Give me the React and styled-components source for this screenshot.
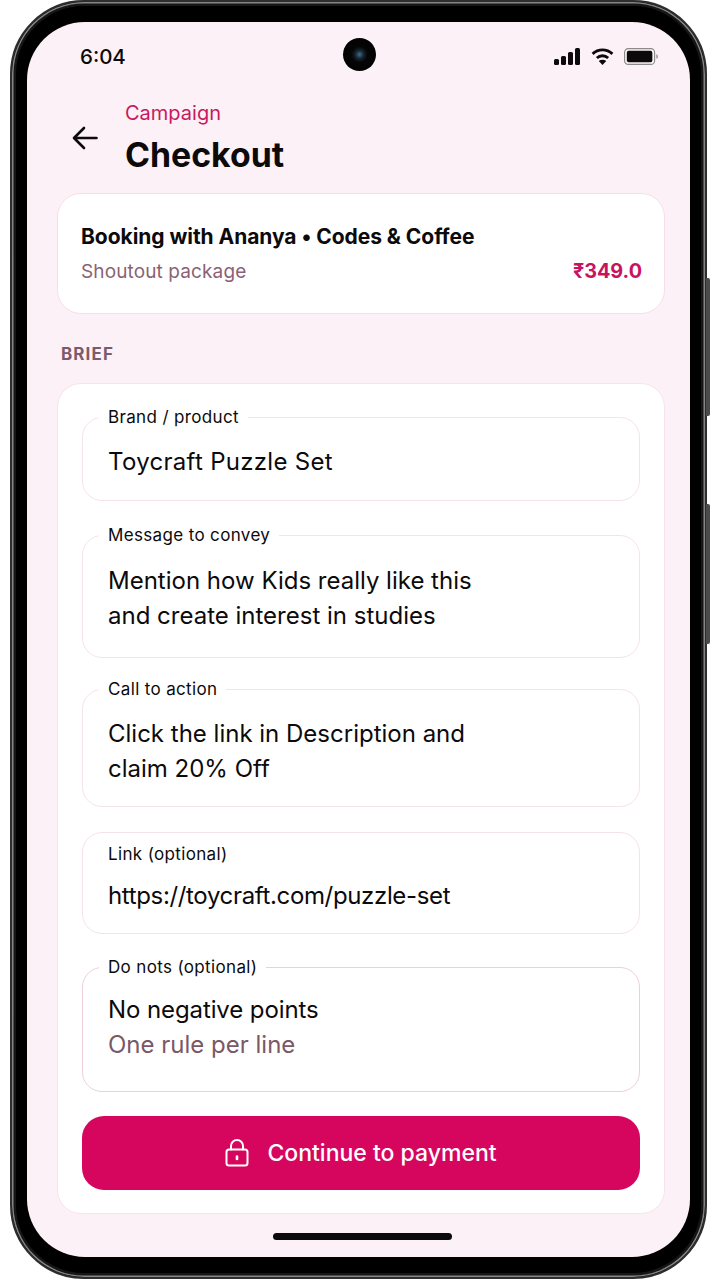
import React from "react"
import styled, { createGlobalStyle } from "styled-components"

const GlobalStyle = createGlobalStyle`
  html, body {
    margin: 0;
    padding: 0;
    background: #fff;
  }
  body {
    font-family: Inter, "Noto Sans", sans-serif;
    color: #0c0a0b;
  }
  * {
    box-sizing: border-box;
  }
`

function BackArrow() {
  return (
    <svg width="26" height="24" viewBox="0 0 26 24" fill="none" stroke="#0c0a0b" strokeWidth="2.6" strokeLinecap="round" strokeLinejoin="round">
      <path d="M24.5 12H2M12 2 2 12l10 10" />
    </svg>
  )
}

function Signal() {
  return (
    <svg width="26" height="17" viewBox="0 0 26 17" fill="#0c0a0b">
      <rect x="0" y="11" width="5" height="6" rx="1.5" />
      <rect x="7" y="8" width="5" height="9" rx="1.5" />
      <rect x="14" y="4" width="5" height="13" rx="1.5" />
      <rect x="21" y="0" width="5" height="17" rx="1.5" />
    </svg>
  )
}

function Wifi() {
  return (
    <svg width="23" height="17" viewBox="0 0 24 18" fill="none" stroke="#0c0a0b" strokeWidth="3">
      <path d="M1.5 6.2C7.5 .6 16.5 .6 22.5 6.2" />
      <path d="M6 10.6c3.5-3.2 8.5-3.2 12 0" />
      <path d="M12 18l-4-4.2c2.300-1.800 5.700-1.800 8 0z" fill="#0c0a0b" stroke="none" />
    </svg>
  )
}

function Battery() {
  return (
    <svg width="34" height="17" viewBox="0 0 36 18">
      <rect x=".6" y=".6" width="31.800" height="16.800" rx="4" fill="none" stroke="#8a8a8a" strokeWidth="1.200" />
      <rect x="3" y="3" width="27" height="12" rx="2" fill="#0c0a0b" />
      <path d="M34.300 6.500c1 .3 1.500 1.300 1.500 2.500s-.5 2.200-1.500 2.500z" fill="#8a8a8a" />
    </svg>
  )
}

function LockIcon() {
  return (
    <svg width="24" height="28" viewBox="0 0 24 28" fill="none" stroke="#fff" strokeWidth="2" strokeLinecap="round">
      <rect x="1.500" y="10.500" width="21" height="16" rx="2.500" />
      <path d="M6 10.500V7a6 6 0 0 1 12 0v3.500" />
      <path d="M12 17.500v2.500" strokeWidth="2.600" />
    </svg>
  )
}

function Field({ label, lines, hint, height, top, strong, gap, track }) {
  return (
    <FieldBox $height={height} $top={top} $strong={strong}>
      <FieldLabel $gap={gap}>{label}</FieldLabel>
      {lines.map((line) => (
        <FieldLine key={line} $track={track}>{line}</FieldLine>
      ))}
      {hint && <FieldLine $hint>{hint}</FieldLine>}
    </FieldBox>
  )
}

export default function App() {
  return (
    <Page>
      <GlobalStyle />
      <Phone>
        <SideKey $top={276} $height={138} />
        <SideKey $top={502} $height={140} />
        <Screen>
          <StatusBar>
            <Clock>6:04</Clock>
            <Camera />
            <StatusIcons>
              <Signal />
              <Wifi />
              <Battery />
            </StatusIcons>
          </StatusBar>

          <Header>
            <BackButton>
              <BackArrow />
            </BackButton>
            <div>
              <Eyebrow>Campaign</Eyebrow>
              <Title>Checkout</Title>
            </div>
          </Header>

          <SummaryCard>
            <SummaryTitle>Booking with Ananya • Codes &amp; Coffee</SummaryTitle>
            <SummaryRow>
              <SummaryPackage>Shoutout package</SummaryPackage>
              <Price>₹349.0</Price>
            </SummaryRow>
          </SummaryCard>

          <SectionLabel>BRIEF</SectionLabel>

          <BriefCard>
            <Field label="Brand / product" lines={["Toycraft Puzzle Set"]} height={94} track={0.3} />
            <Field label="Message to convey" lines={["Mention how Kids really like this", "and create interest in studies"]} height={133} top={24} gap={18} />
            <Field label="Call to action" lines={["Click the link in Description and", "claim 20% Off"]} height={128} top={21} />
            <InlineField>
              <InlineLabel>Link (optional)</InlineLabel>
              <FieldLine $track={-0.35}>https://toycraft.com/puzzle-set</FieldLine>
            </InlineField>
            <Field label="Do nots (optional)" lines={["No negative points"]} hint="One rule per line" height={135} top={23} gap={15} strong track={-0.1} />
            <PayButton>
              <LockIcon />
              Continue to payment
            </PayButton>
          </BriefCard>

          <HomeBar />
        </Screen>
      </Phone>
    </Page>
  )
}

const Page = styled.div`
  width: 720px;
  height: 1280px;
  padding-left: 10px;
  overflow: hidden;
  background: #fff;
`

const Phone = styled.div`
  position: relative;
  width: 697px;
  height: 1279px;
  padding: 20px 15px;
  background: #000;
  border: 2px solid #2e2e2e;
  border-radius: 74px;
  box-shadow: inset 0 0 0 1.5px #858585, inset 0 0 0 4px #161616;
`

const SideKey = styled.div`
  position: absolute;
  top: ${(p) => p.$top}px;
  right: -5px;
  width: 4px;
  height: ${(p) => p.$height}px;
  background: #4b4b4b;
  border-radius: 0 2px 2px 0;
`

const Screen = styled.div`
  display: flex;
  flex-direction: column;
  height: 100%;
  padding: 0 25px 0 30px;
  background: #fcf1f6;
  border-radius: 58px;
  overflow: hidden;
`

const StatusBar = styled.div`
  position: relative;
  display: flex;
  align-items: center;
  justify-content: space-between;
  flex: none;
  height: 68px;
  padding: 0 7px 0 23px;
`

const Clock = styled.span`
  font-size: 20.5px;
  font-weight: 500;
`

const Camera = styled.div`
  position: absolute;
  top: 16px;
  left: 286px;
  width: 33px;
  height: 33px;
  border-radius: 50%;
  background: radial-gradient(circle, #3c6d8f 0, #16242e 18%, #050505 34%, #000 100%);
`

const StatusIcons = styled.div`
  display: flex;
  align-items: center;
  gap: 10.5px;
`

const Header = styled.header`
  display: flex;
  align-items: flex-end;
  flex: none;
  height: 103px;
  padding: 0 0 17px 15px;
`

const BackButton = styled.div`
  display: flex;
  width: 53px;
  height: 24px;
  margin-bottom: 26px;
`

const Eyebrow = styled.div`
  font-size: 20px;
  line-height: 26px;
  color: #c9185f;
`

const Title = styled.h1`
  margin: 8px 0 0;
  font-size: 33.8px;
  line-height: 42px;
  font-weight: 700;
`

const SummaryCard = styled.section`
  flex: none;
  height: 121px;
  padding: 28px 22px 0 23px;
  background: #fff;
  border: 1px solid #f5e0e8;
  border-radius: 24px;
`

const SummaryTitle = styled.div`
  font-size: 21px;
  line-height: 30px;
  font-weight: 700;
  letter-spacing: -0.05px;
`

const SummaryRow = styled.div`
  display: flex;
  align-items: center;
  justify-content: space-between;
  margin-top: 7px;
`

const SummaryPackage = styled.span`
  font-size: 19px;
  letter-spacing: 0.12px;
  color: #8a6274;
`

const Price = styled.span`
  font-size: 19.8px;
  font-weight: 700;
  color: #c8145f;
`

const SectionLabel = styled.div`
  flex: none;
  margin: 29px 0 0 4px;
  font-size: 17px;
  line-height: 22px;
  font-weight: 700;
  letter-spacing: 1.1px;
  color: #7d5a6b;
`

const BriefCard = styled.section`
  display: flex;
  flex-direction: column;
  flex: none;
  height: 831px;
  margin-top: 18px;
  padding: 23px 24px 0;
  background: #fff;
  border: 1px solid #f6e4ec;
  border-radius: 24px;
`

const FieldBox = styled.fieldset`
  flex: none;
  min-width: 0;
  height: ${(p) => p.$height}px;
  margin: ${(p) => p.$top || 0}px 0 0;
  padding: 0 25px;
  border: 1px solid ${(p) => (p.$strong ? "#eccfda" : "#f5e3ea")};
  border-radius: 20px;
`

const FieldLabel = styled.legend`
  margin: 0 0 ${(p) => p.$gap || 17}px -9px;
  padding: 0 9px;
  font-size: 17px;
  line-height: 20px;
  letter-spacing: 0.35px;
`

const FieldLine = styled.div`
  font-size: 24px;
  line-height: 35px;
  letter-spacing: ${(p) => p.$track || 0}px;
  color: ${(p) => (p.$hint ? "#7a5867" : "#0c0a0b")};
`

const InlineField = styled.div`
  flex: none;
  height: 102px;
  margin-top: 25px;
  padding: 11px 25px 0;
  border: 1px solid #f5e3ea;
  border-radius: 20px;
`

const InlineLabel = styled.div`
  margin-bottom: 14px;
  font-size: 17px;
  line-height: 20px;
  letter-spacing: 0.35px;
`

const PayButton = styled.button`
  display: flex;
  align-items: center;
  justify-content: center;
  gap: 18px;
  flex: none;
  height: 74px;
  margin-top: 24px;
  padding: 0;
  font-family: inherit;
  font-size: 23px;
  font-weight: 500;
  color: #fff;
  background: #d6065f;
  border: 0;
  border-radius: 22px;
`

const HomeBar = styled.div`
  flex: none;
  align-self: center;
  width: 179px;
  height: 7px;
  margin: 19px 0 0 2px;
  background: #0c0a0b;
  border-radius: 4px;
`
